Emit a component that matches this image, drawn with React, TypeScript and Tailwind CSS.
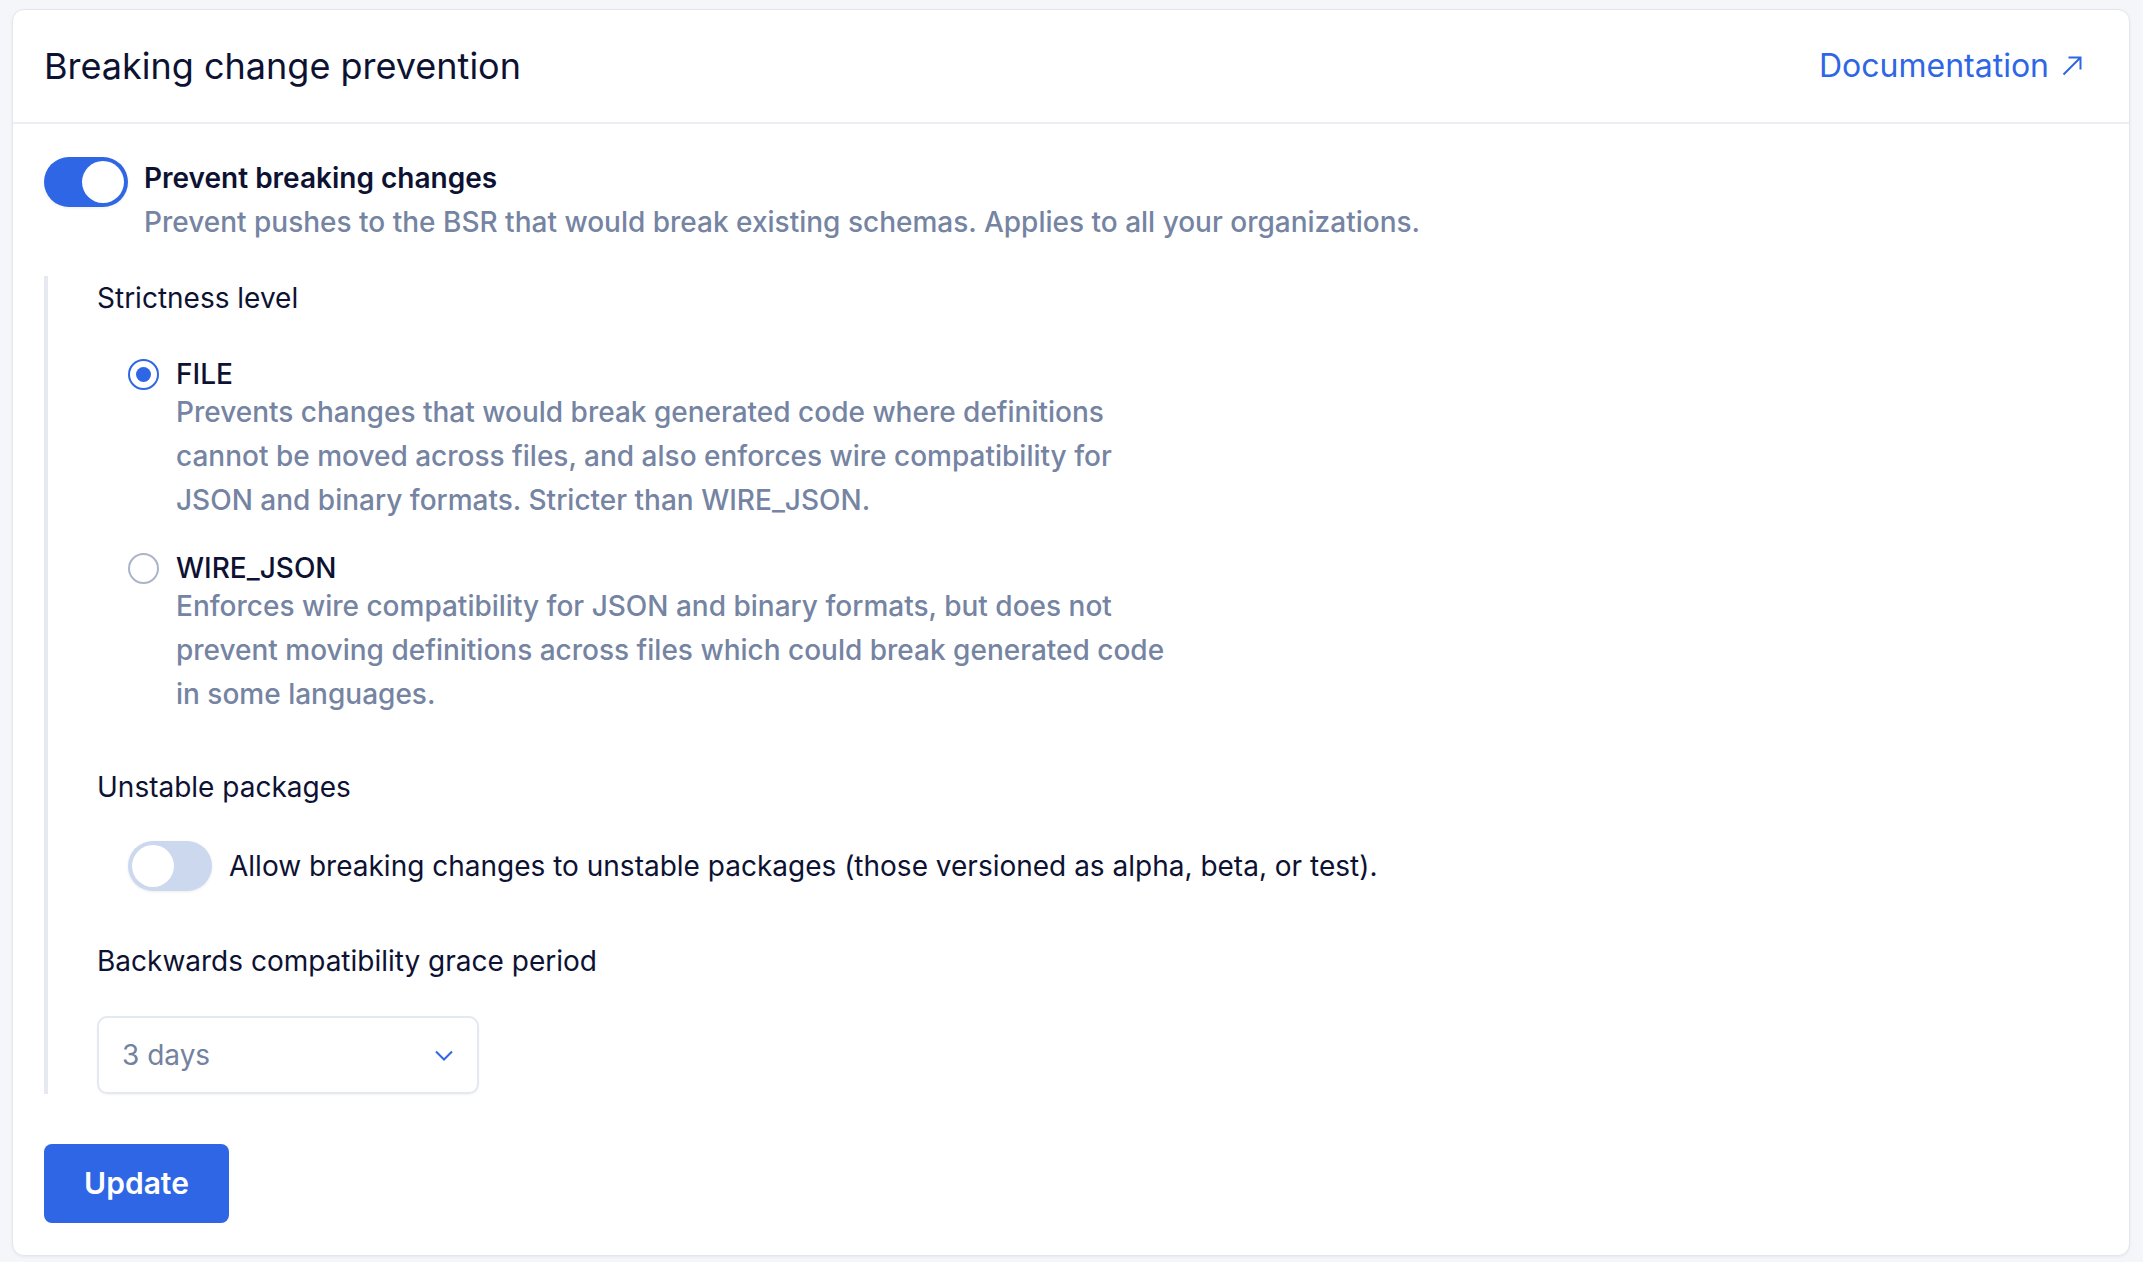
import clsx from 'clsx'

const options = [
  {
    name: 'FILE',
    checked: true,
    description:
      'Prevents changes that would break generated code where definitions cannot be moved across files, and also enforces wire compatibility for JSON and binary formats. Stricter than WIRE_JSON.',
  },
  {
    name: 'WIRE_JSON',
    checked: false,
    description:
      'Enforces wire compatibility for JSON and binary formats, but does not prevent moving definitions across files which could break generated code in some languages.',
  },
]

function Toggle({ on, className }: { on: boolean; className?: string }) {
  return (
    <span
      className={clsx(
        'flex h-[50px] w-[84px] shrink-0 items-center rounded-full p-[4px] shadow-[0_1px_3px_rgba(15,23,42,0.08)]',
        on ? 'justify-end bg-[#2e66e5]' : 'justify-start bg-[#cbd8ee]',
        className,
      )}
    >
      <span className="h-[42px] w-[42px] rounded-full bg-white" />
    </span>
  )
}

function Radio({ checked }: { checked: boolean }) {
  return (
    <span
      className={clsx(
        'flex h-[31px] w-[31px] shrink-0 items-center justify-center rounded-full border-2 bg-white',
        checked ? 'border-[#2e66e5]' : 'border-[#aab5c9]',
      )}
    >
      {checked && <span className="h-[15px] w-[15px] rounded-full bg-[#2e66e5]" />}
    </span>
  )
}

export default function App() {
  return (
    <div className="min-h-screen bg-[#f5f6fa] pb-[7px] pl-3 pr-[13px] pt-[9px] font-['Inter',sans-serif]">
      <section className="rounded-[12px] border border-[#e3e6ed] bg-white shadow-[0_1px_3px_rgba(15,23,42,0.06)]">
        {/* Header */}
        <header className="flex h-[114px] items-center justify-between border-b-2 border-[#eceef3] pl-[31px] pr-[47px]">
          <h2 className="text-[36px] leading-[48px] text-[#0d1233]">Breaking change prevention</h2>
          <a href="#" className="flex items-center gap-[13px] text-[32px] leading-[44px] text-[#2f66e5]">
            Documentation
            <svg width="20" height="20" viewBox="0 0 20 20" fill="none" stroke="currentColor" strokeWidth="2">
              <path d="M1.5 18.5 18.5 1.5M6.5 1.5h12v12" />
            </svg>
          </a>
        </header>

        <div className="pb-8 pl-[31px] pr-8 pt-8">
          {/* Main switch */}
          <div className="flex items-start gap-4">
            <Toggle on className="mt-[1px]" />
            <div>
              <p className="text-[28px] font-semibold leading-[44px] text-[#0d1233]">Prevent breaking changes</p>
              <p className="text-[28px] font-medium leading-[44px] text-[#7584a2]">
                Prevent pushes to the BSR that would break existing schemas. Applies to all your organizations.
              </p>
            </div>
          </div>

          {/* Nested settings */}
          <div className="mt-8 border-l-4 border-[#e6e9f0] pl-[49px]">
            <p className="text-[28px] leading-[44px] text-[#0d1233]">Strictness level</p>

            <div className="ml-[31px] mt-[38px] flex flex-col gap-[30px]">
              {options.map((opt) => (
                <div key={opt.name} className="flex gap-[17px]">
                  <div className="flex h-8 items-center">
                    <Radio checked={opt.checked} />
                  </div>
                  <div>
                    <p className="text-[28px] font-medium leading-[32px] text-[#0d1233]">{opt.name}</p>
                    <p className="max-w-[990px] text-[28px] font-medium leading-[44px] text-[#7584a2]">
                      {opt.description}
                    </p>
                  </div>
                </div>
              ))}
            </div>

            <p className="mt-[49px] text-[28px] leading-[44px] text-[#0d1233]">Unstable packages</p>
            <div className="ml-[31px] mt-8 flex items-center gap-[17px]">
              <Toggle on={false} />
              <span className="text-[28px] leading-[44px] text-[#0d1233]">
                Allow breaking changes to unstable packages (those versioned as alpha, beta, or test).
              </span>
            </div>

            <p className="mt-12 text-[28px] leading-[44px] text-[#0d1233]">Backwards compatibility grace period</p>
            <div className="mt-[33px] flex h-[78px] w-[382px] items-center justify-between rounded-[10px] border-2 border-[#e4e8ef] pl-[23px] pr-[24px] shadow-[0_1px_2px_rgba(15,23,42,0.05)]">
              <span className="text-[28px] text-[#7282a0]">3 days</span>
              <svg width="18" height="11" viewBox="0 0 18 11" fill="none" stroke="#2e66e5" strokeWidth="2">
                <path d="M1 1.5 9 9.5 17 1.5" />
              </svg>
            </div>
          </div>

          <button className="mt-[50px] flex h-[79px] w-[185px] items-center justify-center rounded-[8px] bg-[#2e66e5] text-[30px] font-semibold text-white">
            Update
          </button>
        </div>
      </section>
    </div>
  )
}
